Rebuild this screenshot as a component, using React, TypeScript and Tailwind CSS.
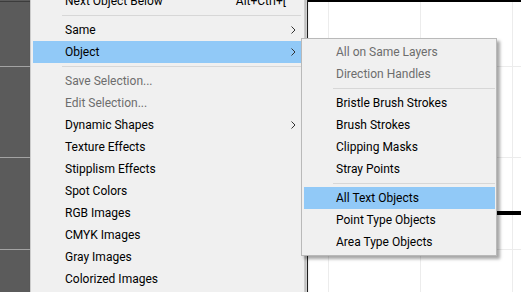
const font = { fontFamily: 'Roboto, "Noto Sans", "Liberation Sans", sans-serif' };

type Item =
  | { kind: 'sep' }
  | { kind: 'item'; label: string; disabled?: boolean; active?: boolean; sub?: boolean; shortcut?: string };

const mainItems: Item[] = [
  { kind: 'item', label: 'Next Object Below', shortcut: 'Alt+Ctrl+[' },
  { kind: 'sep' },
  { kind: 'item', label: 'Same', sub: true },
  { kind: 'item', label: 'Object', sub: true, active: true },
  { kind: 'sep' },
  { kind: 'item', label: 'Save Selection...', disabled: true },
  { kind: 'item', label: 'Edit Selection...', disabled: true },
  { kind: 'item', label: 'Dynamic Shapes', sub: true },
  { kind: 'item', label: 'Texture Effects' },
  { kind: 'item', label: 'Stipplism Effects' },
  { kind: 'item', label: 'Spot Colors' },
  { kind: 'item', label: 'RGB Images' },
  { kind: 'item', label: 'CMYK Images' },
  { kind: 'item', label: 'Gray Images' },
  { kind: 'item', label: 'Colorized Images' },
];

const subItems: Item[] = [
  { kind: 'item', label: 'All on Same Layers', disabled: true },
  { kind: 'item', label: 'Direction Handles', disabled: true },
  { kind: 'sep' },
  { kind: 'item', label: 'Bristle Brush Strokes' },
  { kind: 'item', label: 'Brush Strokes' },
  { kind: 'item', label: 'Clipping Masks' },
  { kind: 'item', label: 'Stray Points' },
  { kind: 'sep' },
  { kind: 'item', label: 'All Text Objects', active: true },
  { kind: 'item', label: 'Point Type Objects' },
  { kind: 'item', label: 'Area Type Objects' },
];

function Chevron() {
  return (
    <svg width="5" height="8" viewBox="0 0 5 8" className="shrink-0">
      <polyline points="0.5,0.5 4,4 0.5,7.5" fill="none" stroke="#333" strokeWidth="1" />
    </svg>
  );
}

function MenuList({ items }: { items: Item[] }) {
  return (
    <>
      {items.map((it, i) =>
        it.kind === 'sep' ? (
          <div key={i} className="h-[7px] flex items-center pl-[29px]">
            <div className="h-px w-full bg-[#d7d7d7]" />
          </div>
        ) : (
          <div
            key={i}
            className={`h-[22px] flex items-center pl-[32px] pr-[5px] text-[12px] ${
              it.active ? 'bg-[#91c9f7]' : ''
            } ${it.disabled ? 'text-[#6d6d6d]' : 'text-black'}`}
          >
            <span className="flex-1 whitespace-nowrap">{it.label}</span>
            {it.shortcut && <span className="mr-[10px] whitespace-nowrap">{it.shortcut}</span>}
            {it.sub && <Chevron />}
          </div>
        )
      )}
    </>
  );
}

// pasteboard strip with the artboard grid running through it
function Pasteboard() {
  return (
    <svg width="30" height="292" className="shrink-0 block">
      <rect width="30" height="292" fill="#5b5b5b" />
      <rect y="1" width="30" height="1" fill="#3c3c3c" />
      {[66, 157, 249].map((y) => (
        <rect key={y} y={y} width="30" height="1" fill="#a3a3a3" />
      ))}
    </svg>
  );
}

// white artboard with faint grid and a thick path
function Artboard() {
  return (
    <svg width="491" height="292" className="block flex-1">
      <rect width="491" height="292" fill="#ffffff" />
      {[298, 390, 482].map((x) => (
        <rect key={x} x={x} width="1" height="292" fill="#ececec" />
      ))}
      {[66, 157, 249].map((y) => (
        <rect key={y} x="278" y={y} width="213" height="1" fill="#ececec" />
      ))}
      <rect x="277" y="0" width="214" height="2" fill="#000" />
      <rect x="277" y="0" width="1" height="292" fill="#222" />
      <rect x="278" y="211" width="213" height="4" fill="#000" />
    </svg>
  );
}

export default function App() {
  return (
    <div className="relative w-[521px] h-[292px] overflow-hidden flex bg-white" style={font}>
      <Pasteboard />
      <Artboard />

      {/* main menu */}
      <div className="absolute left-[30px] top-[-12px] w-[275px] h-[320px] bg-[#f0f0f0] border border-[#cccccc] pl-[2px] pr-[3px] pt-[1px] shadow-[2px_2px_3px_rgba(0,0,0,0.3)]">
        <MenuList items={mainItems} />
      </div>

      {/* submenu */}
      <div className="absolute left-[301px] top-[38px] w-[196px] h-[218px] bg-[#f0f0f0] border border-[#b9b9b9] pl-[2px] pr-[1px] pt-[2px] shadow-[3px_3px_3px_rgba(0,0,0,0.35)]">
        <MenuList items={subItems} />
      </div>
    </div>
  );
}
